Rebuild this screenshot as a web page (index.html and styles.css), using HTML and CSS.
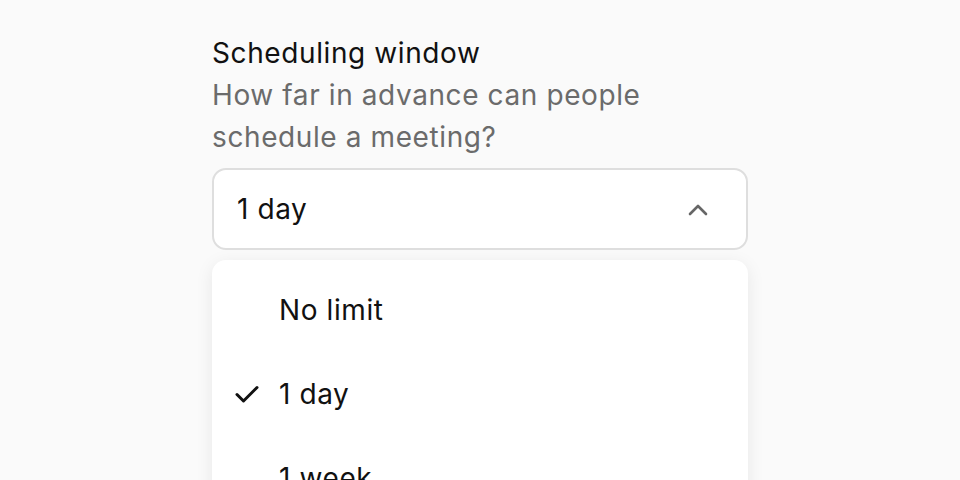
FILE: index.html
```html
<!DOCTYPE html>
<html lang="en">
<head>
    <meta charset="UTF-8">
    <meta name="viewport" content="width=device-width, initial-scale=1.0">
    <title>Scheduling window</title>
    <link rel="stylesheet" href="styles.css">
</head>
<body>
    <div class="field">
        <div class="field-label">Scheduling window</div>
        <div class="field-help">How far in advance can people schedule a meeting?</div>

        <button class="select" type="button">
            <span>1 day</span>
            <svg class="chevron" width="24" height="24" viewBox="0 0 24 24" fill="none" stroke="#666" stroke-width="2.6" stroke-linecap="round" stroke-linejoin="round">
                <path d="M4 17 L12 9 L20 17"/>
            </svg>
        </button>

        <ul class="menu">
            <li class="menu-item">
                <span class="check"></span>
                <span>No limit</span>
            </li>
            <li class="menu-item selected">
                <span class="check">
                    <svg width="26" height="26" viewBox="0 0 26 26" fill="none" stroke="#111" stroke-width="3" stroke-linecap="round" stroke-linejoin="round">
                        <path d="M3 13.5 L9.5 20 L23 6.5"/>
                    </svg>
                </span>
                <span>1 day</span>
            </li>
            <li class="menu-item">
                <span class="check"></span>
                <span>1 week</span>
            </li>
        </ul>
    </div>
</body>
</html>
```

FILE: styles.css
```css
body {
    margin: 0;
    padding: 0;
    background-color: #fafafa;
    font-family: Inter, "Noto Sans", sans-serif;
    color: #111;
    height: 480px;
    overflow: hidden;
}

.field {
    width: 536px;
    margin: 0 auto;
    padding-top: 32px;
    font-size: 28px;
    line-height: 42px;
    letter-spacing: 0.6px;
}

.field-label {
    color: #111;
}

.field-help {
    color: #6b6b6b;
    width: 460px;
}

.select {
    margin-top: 10px;
    width: 100%;
    height: 82px;
    box-sizing: border-box;
    display: flex;
    align-items: center;
    justify-content: space-between;
    padding: 0 36px 0 23px;
    background-color: #fff;
    border: 2px solid #dedede;
    border-radius: 14px;
    font-family: inherit;
    font-size: 28px;
    letter-spacing: inherit;
    color: #111;
}

.chevron {
    display: block;
}

.menu {
    list-style: none;
    margin: 10px 0 0;
    padding: 8px 0;
    background-color: #fff;
    border-radius: 14px;
    box-shadow: 0 4px 18px rgba(0, 0, 0, 0.08);
}

.menu-item {
    display: flex;
    align-items: center;
    height: 84px;
    padding-left: 22px;
}

.check {
    width: 45px;
    display: flex;
    align-items: center;
}
```
